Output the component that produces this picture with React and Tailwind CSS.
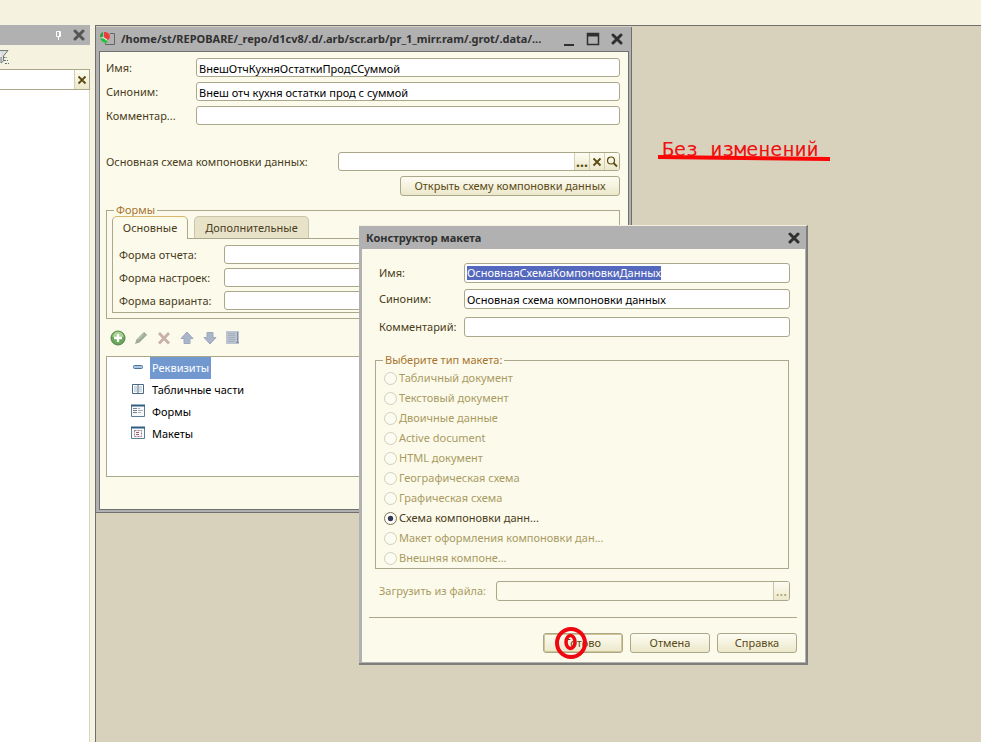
import React from "react";

const field =
  "min-w-0 rounded-[3px] border border-[#aaa78a] bg-white px-[2px] text-black outline-none";
const gradient = "bg-linear-to-b from-[#fdfcf2] to-[#ece8cb]";
const button = `h-5 rounded-[3px] border border-[#aaa78a] text-center leading-[18px] text-[#5a4a16] ${gradient}`;

function CloseIcon({ className = "" }) {
  return (
    <svg width="12" height="12" viewBox="0 0 12 12" className={className} aria-hidden="true">
      <path d="M2 2 10 10M10 2 2 10" stroke="currentColor" strokeWidth="3" strokeLinecap="round" />
    </svg>
  );
}

function SmallCross() {
  return (
    <svg width="10" height="10" viewBox="0 0 10 10" aria-hidden="true">
      <path d="M1.5 1.500 8.5 8.500M8.5 1.500 1.5 8.500" stroke="#5c4a12" strokeWidth="1.800" />
    </svg>
  );
}

function FieldRow({ id, label, value = "", labelClass, inputClass }) {
  return (
    <div className="flex items-center">
      <label htmlFor={id} className={`shrink-0 ${labelClass}`}>
        {label}
      </label>
      <input id={id} type="text" defaultValue={value} className={`${field} flex-1 ${inputClass}`} />
    </div>
  );
}

function SidePanel() {
  return (
    <aside className="flex w-[90px] shrink-0 flex-col">
      <div className="flex h-5 items-center justify-end gap-[11px] bg-[#b1b1b1] pr-[5px]">
        <button aria-label="Закрепить" className="text-white">
          <svg width="7" height="10" viewBox="0 0 7 10" fill="none" stroke="currentColor">
            <path d="M1.500 1.500H5.500V6.500H1.500ZM3.500 6.500V10M4.500 1.500V6" />
          </svg>
        </button>
        <button aria-label="Закрыть панель" className="text-[#555]">
          <CloseIcon />
        </button>
      </div>
      <div className="flex h-6 items-center">
        <svg width="10" height="16" viewBox="0 0 10 16" fill="none" aria-hidden="true">
          <path d="M0 1.500H8L3.500 7V12L1 14V8" fill="#d9dde0" stroke="#77797c" />
          <path d="M3.500 8.500H7M4 11.500H8M5 14.500H9" stroke="#60757b" strokeDasharray="2 1" />
        </svg>
      </div>
      <div className="flex h-[21px] border border-l-0 border-[#aaa78a] bg-white">
        <input aria-label="Поиск" type="text" className="min-w-0 flex-1 outline-none" />
        <button
          aria-label="Очистить"
          className={`flex w-[15px] items-center justify-center border-l border-[#d3cfb2] ${gradient}`}
        >
          <SmallCross />
        </button>
      </div>
      <div className="flex-1 border-r border-[#d8d5c0] bg-white" />
    </aside>
  );
}

function DocumentIcon() {
  return (
    <svg width="16" height="16" viewBox="0 0 16 16" fill="none" aria-hidden="true">
      <path d="M11 2.500H15.500V13.500H6.500V12" stroke="#666" />
      <path d="M5 6V1A5 5 0 0 1 11 5.500A5 5 0 0 1 9 9Z" fill="#ee3a3a" />
      <path d="M4 1A5 5 0 0 0 1 6H4Z" fill="#25a837" />
      <path d="M1 7.500H5L9 11A5 5 0 0 1 2 9Z" fill="#1fc437" />
      <path d="M3 6 8 9" stroke="#dfeedd" />
    </svg>
  );
}

const toolbar = [
  {
    name: "Добавить",
    art: (
      <>
        <circle cx="8" cy="8" r="7" fill="#69a75a" stroke="#55804c" />
        <path d="M2.500 7A5.500 5.500 0 0 1 13.500 7Z" fill="#a7d294" />
        <path d="M8 4V12M4 8H12" stroke="#fff" strokeWidth="2.400" />
      </>
    ),
  },
  {
    name: "Изменить",
    art: (
      <>
        <path d="M2 14 3.500 9.500 10 3 13 6 6.500 12.500Z" fill="#9dac96" />
        <path d="M10 3 11 2 14 5 13 6Z" fill="#8d9c8b" />
        <path d="M5 9.500 10.500 4.500" stroke="#c3cdb9" />
      </>
    ),
  },
  {
    name: "Удалить",
    art: <path d="M3 3 13 13.500M13 3 3 13.500" stroke="#c9b0a8" strokeWidth="2.800" />,
  },
  {
    name: "Вверх",
    art: <path d="M8 2 14 8.500H11V13.500H5V8.500H2Z" fill="#aab5c9" stroke="#9ca8bc" />,
  },
  {
    name: "Вниз",
    art: <path d="M8 14 14 7.500H11V2.500H5V7.500H2Z" fill="#aab5c9" stroke="#9ca8bc" />,
  },
  {
    name: "Упорядочить",
    art: (
      <>
        <path d="M1 1H14V14H1Z" fill="#bcc4cf" />
        <path d="M3 3.500H10M3 5.500H10M3 7.500H10M3 9.500H10M3 11.500H10" stroke="#a3aebe" />
        <path d="M12.500 2V13M11 12.500H14" stroke="#8490a4" />
      </>
    ),
  },
];

const tree = [
  {
    name: "Реквизиты",
    selected: true,
    art: <rect x="2.500" y="5.500" width="9" height="3" rx="1" fill="#a9c8e5" stroke="#4d7199" />,
  },
  {
    name: "Табличные части",
    art: (
      <>
        <path d="M1.500 2.500H12.500V11.500H1.500ZM7 2.500V12" fill="#fff" stroke="#496789" />
        <path d="M3 5H6M3 7H6M3 9H6M8 5H11M8 7H11M8 9H11" stroke="#a3b3c6" />
      </>
    ),
  },
  {
    name: "Формы",
    art: (
      <>
        <path d="M.5 1.500H13.500V12.500H.5Z" fill="#f6f8fa" stroke="#5c7f98" />
        <path d="M0 1.500H14" stroke="#315e80" strokeWidth="2" />
        <path d="M2 4.500H6M2 6.500H6M2 8.500H6" stroke="#777f88" />
        <path d="M7 4.500H9M7 6.500H12M7 8.500H10" stroke="#a9afb6" />
      </>
    ),
  },
  {
    name: "Макеты",
    art: (
      <>
        <path d="M.5 1.500H13.500V12.500H.5Z" fill="#f6f8fa" stroke="#5c7f98" />
        <path d="M0 1.500H14" stroke="#315e80" strokeWidth="2" />
        <path d="M3.500 4.500H10.500V10.500H3.500Z" stroke="#a07885" strokeDasharray="2 1" fill="none" />
        <path d="M5 6.500H9M5 8.500H9" stroke="#a05c70" strokeDasharray="3 1" />
      </>
    ),
  },
];

function ReportWindow() {
  return (
    <section className="absolute left-0 top-px w-[536px] border-b border-r border-[#6f6f6f] bg-[#b1b1b1] pb-[2px] pl-[3px] pr-[2px]">
      <header className="flex h-6 items-center pr-[6px]">
        <DocumentIcon />
        <h1 className="ml-[6px] min-w-0 flex-1 truncate font-bold text-[#303030]">
          /home/st/REPOBARE/_repo/d1cv8/.d/.arb/scr.arb/pr_1_mirr.ram/.grot/.data/...
        </h1>
        <div className="flex items-center gap-[11px] pl-2 text-[#303030]">
          <button aria-label="Свернуть">
            <svg width="12" height="14" viewBox="0 0 12 14">
              <path d="M1 13H11" stroke="currentColor" strokeWidth="2" />
            </svg>
          </button>
          <button aria-label="Развернуть">
            <svg width="14" height="14" viewBox="0 0 14 14" fill="none">
              <path d="M1.500 1.500H12.500V12.500H1.500Z" stroke="currentColor" strokeWidth="1.500" />
              <path d="M1 3H13" stroke="currentColor" strokeWidth="3" />
            </svg>
          </button>
          <button aria-label="Закрыть">
            <CloseIcon />
          </button>
        </div>
      </header>
      <div className="border border-[#6f6f6f] bg-[#fcfbeb] pb-8 pl-[6px] pr-2 pt-[6px]">
        <div className="flex flex-col gap-[5px]">
          <FieldRow id="r-name" label="Имя:" value="ВнешОтчКухняОстаткиПродССуммой" labelClass="w-[90px]" inputClass="h-[19px] pt-[2px]" />
          <FieldRow id="r-syn" label="Синоним:" value="Внеш отч кухня остатки прод с суммой" labelClass="w-[90px]" inputClass="h-[19px] pt-[2px]" />
          <FieldRow id="r-com" label="Комментар..." labelClass="w-[90px]" inputClass="h-[19px]" />
        </div>
        <div className="mt-[27px] flex items-center">
          <label htmlFor="r-schema" className="w-[232px] shrink-0">
            Основная схема компоновки данных:
          </label>
          <div className="flex h-[19px] flex-1 overflow-hidden rounded-[3px] border border-[#aaa78a] bg-white text-[#5c4a12]">
            <input id="r-schema" type="text" className="min-w-0 flex-1 outline-none" />
            <button aria-label="Выбрать" className={`w-[15px] border-l border-[#d3cfb2] text-sm font-bold leading-[17px] ${gradient}`}>
              ...
            </button>
            <button aria-label="Очистить" className={`flex w-[15px] items-center justify-center border-l border-[#d3cfb2] ${gradient}`}>
              <SmallCross />
            </button>
            <button aria-label="Открыть" className={`flex w-[15px] items-center justify-center border-l border-[#d3cfb2] ${gradient}`}>
              <svg width="12" height="12" viewBox="0 0 12 12" fill="none" stroke="#5c4a12">
                <circle cx="5" cy="4.500" r="3.500" strokeWidth="1.200" />
                <path d="M7.500 7 11 10.500" strokeWidth="1.800" />
              </svg>
            </button>
          </div>
        </div>
        <div className="mt-[5px] flex justify-end">
          <button className={`${button} w-[220px]`}>Открыть схему компоновки данных</button>
        </div>
        <fieldset className="mt-[6px] border border-[#aaa78a] px-[5px] pb-[5px]">
          <legend className="ml-[2px] h-4 px-[2px] leading-4 text-[#a87330]">Формы</legend>
          <div className="-mt-[2px] flex gap-[6px]" role="tablist">
            <button role="tab" aria-selected="true" className="z-10 -mb-px h-[23px] w-[76px] rounded-t-[5px] border border-b-0 border-[#aaa78a] border-t-[#d9b66d] bg-[#fcfbeb]">
              Основные
            </button>
            <button role="tab" aria-selected="false" className="h-[22px] w-[115px] rounded-t-[5px] border border-b-0 border-[#c9c5a8] bg-[#e8e3c8]">
              Дополнительные
            </button>
          </div>
          <div className="flex flex-col gap-1 border border-[#aaa78a] px-[6px] pb-[2px] pt-[6px]">
            <FieldRow id="f-rep" label="Форма отчета:" labelClass="w-[105px]" inputClass="h-[19px]" />
            <FieldRow id="f-set" label="Форма настроек:" labelClass="w-[105px]" inputClass="h-[19px]" />
            <FieldRow id="f-var" label="Форма варианта:" labelClass="w-[105px]" inputClass="h-[19px]" />
          </div>
        </fieldset>
        <div className="flex h-[37px] items-center gap-[7px] pl-1">
          {toolbar.map((t) => (
            <button key={t.name} aria-label={t.name}>
              <svg width="16" height="16" viewBox="0 0 16 16" fill="none">
                {t.art}
              </svg>
            </button>
          ))}
        </div>
        <ul className="h-[121px] border border-[#aaa78a] bg-white pl-6 text-black">
          {tree.map((t) => (
            <li key={t.name} className="flex h-[22px]">
              <svg width="14" height="14" viewBox="0 0 14 14" fill="none" className="mt-[3px]" aria-hidden="true">
                {t.art}
              </svg>
              <span className={t.selected ? "ml-[5px] bg-[#7298d0] px-[2px] leading-[22px] text-white" : "ml-[5px] px-[2px] leading-[22px]"}>
                {t.name}
              </span>
            </li>
          ))}
        </ul>
      </div>
    </section>
  );
}

const templateTypes = [
  "Табличный документ",
  "Текстовый документ",
  "Двоичные данные",
  "Active document",
  "HTML документ",
  "Географическая схема",
  "Графическая схема",
  "Схема компоновки данн...",
  "Макет оформления компоновки дан...",
  "Внешняя компоне...",
];
const chosen = 7;

function TemplateDialog() {
  return (
    <section
      role="dialog"
      aria-label="Конструктор макета"
      className="absolute left-[263px] top-[199px] w-[449px] border-b-2 border-r-2 border-t border-b-[#7d7d79] border-r-[#7d7d79] border-t-[#f3f0e0] bg-[#b1b1b1] pb-px pl-[3px] pr-px"
    >
      <header className="flex h-[23px] items-center justify-between pl-1 pr-[5px] text-[#303030]">
        <h2 className="font-bold">Конструктор макета</h2>
        <button aria-label="Закрыть">
          <CloseIcon />
        </button>
      </header>
      <div className="bg-[#fcfbeb] pb-[9px] pl-[7px] pr-2 pt-[14px]">
        <div className="pl-[10px] pr-[7px]">
          <div className="flex items-center">
            <label htmlFor="d-name" className="w-[85px] shrink-0">Имя:</label>
            <div className={`${field} flex h-5 flex-1 items-center`}>
              <input
                id="d-name"
                type="text"
                defaultValue="ОсновнаяСхемаКомпоновкиДанных"
                className="field-sizing-content h-[14px] bg-[#5468bd] leading-[14px] text-white outline-none"
              />
            </div>
          </div>
          <div className="mt-[6px]">
            <FieldRow id="d-syn" label="Синоним:" value="Основная схема компоновки данных" labelClass="w-[85px]" inputClass="h-5 pt-px" />
          </div>
          <div className="mt-2">
            <FieldRow id="d-com" label="Комментарий:" labelClass="w-[85px]" inputClass="h-5" />
          </div>
        </div>
        <fieldset className="ml-[6px] mr-2 mt-[15px] border border-[#aaa78a] px-2 pb-0">
          <legend className="-ml-px h-4 px-[2px] leading-4 text-[#a87330]">Выберите тип макета:</legend>
          {templateTypes.map((name, i) => (
            <label key={name} className={i === chosen ? "flex h-5 items-center gap-[2px] text-[#4a3c1c]" : "flex h-5 items-center gap-[2px] text-[#a99a63]"}>
              <input
                type="radio"
                name="template"
                defaultChecked={i === chosen}
                disabled={i !== chosen}
                className="m-0 size-[13px] shrink-0 appearance-none rounded-full border border-[#77745c] bg-[#fdfcf2] checked:bg-radial checked:from-[#33395a] checked:from-30% checked:to-[#fdfcf2] checked:to-40% disabled:border-[#d2cfb8]"
              />
              {name}
            </label>
          ))}
        </fieldset>
        <div className="ml-[10px] mr-[7px] mt-3 flex items-center text-[#a99a63]">
          <label htmlFor="d-file" className="w-[117px] shrink-0">Загрузить из файла:</label>
          <div className="flex h-5 flex-1 overflow-hidden rounded-[3px] border border-[#aaa78a] bg-[#fcfbeb]">
            <input id="d-file" type="text" disabled className="min-w-0 flex-1" />
            <button disabled aria-label="Выбрать файл" className={`w-4 border-l border-[#c9c5a8] text-sm leading-[18px] ${gradient}`}>
              ...
            </button>
          </div>
        </div>
        <hr className="mt-4 border-[#aaa78a]" />
        <div className="mt-[15px] flex justify-end gap-[7px]">
          <div className="relative">
            <button className={`${button} w-20 shadow-[inset_0_0_0_1px_#d3c690]`}>Готово</button>
            <svg width="32" height="32" viewBox="0 0 32 32" fill="none" stroke="#ee0711" className="pointer-events-none absolute -top-[6px] left-3" aria-hidden="true">
              <circle cx="16" cy="16" r="14" strokeWidth="4" />
              <ellipse cx="15.500" cy="15" rx="4.500" ry="6.500" strokeWidth="3.500" />
            </svg>
          </div>
          <button className={`${button} w-20`}>Отмена</button>
          <button className={`${button} w-20`}>Справка</button>
        </div>
      </div>
    </section>
  );
}

export default function App() {
  return (
    <div className="flex min-h-screen flex-col overflow-hidden bg-[#f5f2df] font-['Noto_Sans',sans-serif] text-[11px] leading-4 text-[#4a3c1c]">
      <div className="h-[25px] shrink-0" />
      <div className="flex flex-1">
        <SidePanel />
        <main className="relative ml-[5px] flex-1 border-l border-t border-[#6f6f6f] bg-[#d8d2bd]">
          <ReportWindow />
          <TemplateDialog />
          <p className="absolute left-[566px] top-[111px] font-['DejaVu_Sans_Mono',monospace] text-xl leading-6 text-[#ee1111]">
            Без изменений
          </p>
          <svg width="172" height="6" viewBox="0 0 172 6" className="absolute left-[562px] top-[129px]" aria-hidden="true">
            <path d="M0 2 172 4" stroke="#fb0505" strokeWidth="4" />
          </svg>
        </main>
      </div>
    </div>
  );
}
